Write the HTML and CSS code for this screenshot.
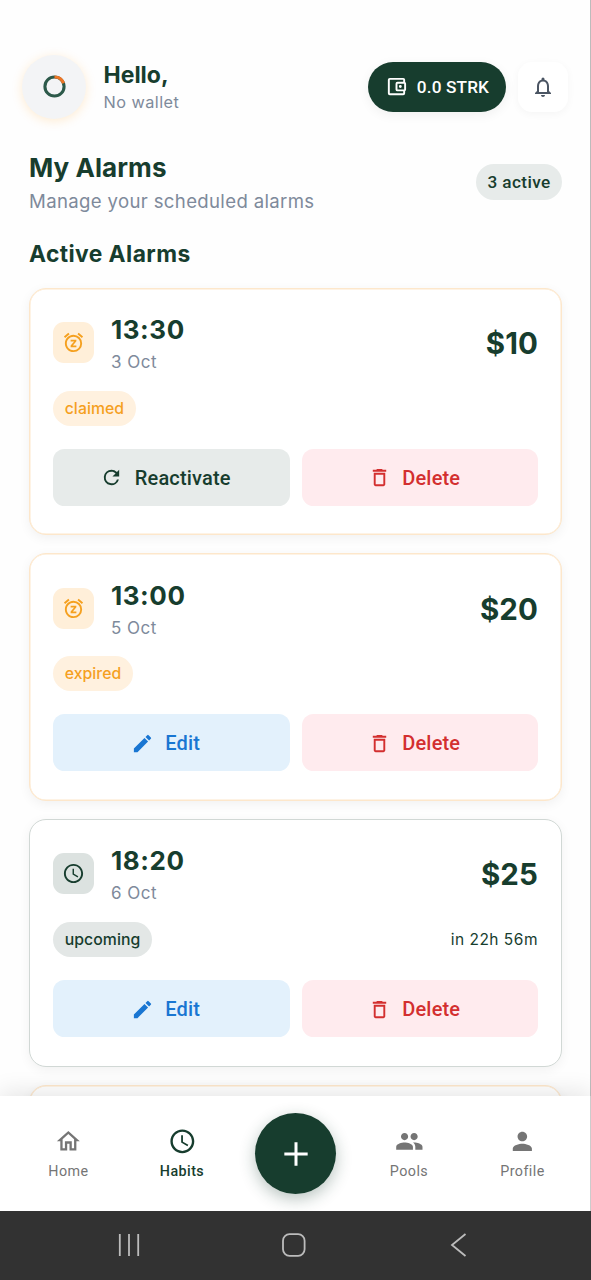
FILE: index.html
```
<!DOCTYPE html>
<html lang="en">
<head>
<meta charset="utf-8">
<title>My Alarms</title>
<link rel="stylesheet" href="styles.css">
</head>
<body>
<svg class="defs" width="0" height="0" aria-hidden="true">
  <symbol id="snooze" viewBox="0 0 24 24"><path d="M22 5.72l-4.6-3.86-1.29 1.53 4.6 3.86L22 5.72zM7.88 3.39L6.6 1.86 2 5.71l1.29 1.53 4.59-3.85zM12 4c-4.97 0-9 4.03-9 9s4.02 9 9 9a9 9 0 0 0 0-18zm0 16c-3.87 0-7-3.13-7-7s3.13-7 7-7 7 3.13 7 7-3.13 7-7 7zm-3-9h3.63L9 15.2V17h6v-2h-3.63L15 10.8V9H9v2z"/></symbol>
  <symbol id="clock" viewBox="0 0 24 24"><path d="M11.99 2C6.47 2 2 6.48 2 12s4.47 10 9.99 10C17.52 22 22 17.52 22 12S17.52 2 11.99 2zM12 20c-4.42 0-8-3.58-8-8s3.58-8 8-8 8 3.58 8 8-3.58 8-8 8zm.5-13H11v6l5.25 3.15.75-1.23-4.5-2.67z"/></symbol>
  <symbol id="trash" viewBox="0 0 24 24"><path d="M6 19c0 1.100.9 2 2 2h8c1.100 0 2-.9 2-2V7H6v12zM8 9h8v10H8V9zm7.500-5l-1-1h-5l-1 1H5v2h14V4z"/></symbol>
  <symbol id="pencil" viewBox="0 0 24 24"><path d="M3 17.250V21h3.750L17.810 9.940l-3.750-3.750L3 17.250zM20.710 7.040a1 1 0 0 0 0-1.410l-2.340-2.340a1 1 0 0 0-1.410 0l-1.830 1.830 3.750 3.750 1.830-1.830z"/></symbol>
  <symbol id="refresh" viewBox="0 0 24 24"><path d="M17.650 6.350A7.960 7.960 0 0 0 12 4a8 8 0 1 0 7.730 10h-2.080A6 6 0 1 1 12 6c1.660 0 3.140.69 4.220 1.780L13 11h7V4l-2.350 2.350z"/></symbol>
</svg>
<div class="phone">
  <main class="screen">
    <header class="top">
      <div class="avatar"><svg viewBox="0 0 24 24"><circle class="ring" cx="12" cy="12" r="10"/><path class="ring-hot" d="M12 2A10 10 0 0 1 21.400 8.600"/></svg></div>
      <div class="who"><div class="hello">Hello,</div><div class="wallet">No wallet</div></div>
      <div class="balance">
        <svg viewBox="0 0 24 24"><path fill-rule="evenodd" d="M21 7.280V5a2 2 0 0 0-2-2H5a2 2 0 0 0-2 2v14a2 2 0 0 0 2 2h14a2 2 0 0 0 2-2v-2.280A2 2 0 0 0 22 15V9a2 2 0 0 0-1-1.720zM20 9v6h-7V9h7zM5 19V5h14v2h-6a2 2 0 0 0-2 2v6a2 2 0 0 0 2 2h6v2H5zM16 10.500a1.500 1.500 0 1 0 0 3 1.500 1.500 0 0 0 0-3z"/></svg>
        <span>0.0 STRK</span>
      </div>
      <div class="bell"><svg viewBox="0 0 24 24"><path d="M12 22c1.100 0 2-.9 2-2h-4c0 1.100.9 2 2 2zm6-6v-5c0-3.070-1.630-5.640-4.500-6.320V4a1.500 1.500 0 0 0-3 0v.68C7.640 5.360 6 7.920 6 11v5l-2 2v1h16v-1l-2-2zm-2 1H8v-6c0-2.480 1.510-4.500 4-4.500s4 2.020 4 4.500v6z"/></svg></div>
    </header>
    <section class="intro">
      <div><h1>My Alarms</h1><p>Manage your scheduled alarms</p></div>
      <span class="count">3 active</span>
    </section>
    <h2>Active Alarms</h2>
    <div class="list">
      <article class="card">
        <div class="summary">
          <span class="tile"><svg><use href="#snooze"/></svg></span>
          <div class="when"><div class="time">13:30</div><div class="date">3 Oct</div></div>
          <div class="stake">$10</div>
        </div>
        <div class="status"><span class="chip">claimed</span></div>
        <div class="actions">
          <div class="btn reactivate"><svg><use href="#refresh"/></svg><span>Reactivate</span></div>
          <div class="btn delete"><svg><use href="#trash"/></svg><span>Delete</span></div>
        </div>
      </article>
      <article class="card">
        <div class="summary">
          <span class="tile"><svg><use href="#snooze"/></svg></span>
          <div class="when"><div class="time">13:00</div><div class="date">5 Oct</div></div>
          <div class="stake">$20</div>
        </div>
        <div class="status"><span class="chip">expired</span></div>
        <div class="actions">
          <div class="btn edit"><svg><use href="#pencil"/></svg><span>Edit</span></div>
          <div class="btn delete"><svg><use href="#trash"/></svg><span>Delete</span></div>
        </div>
      </article>
      <article class="card upcoming">
        <div class="summary">
          <span class="tile"><svg><use href="#clock"/></svg></span>
          <div class="when"><div class="time">18:20</div><div class="date">6 Oct</div></div>
          <div class="stake">$25</div>
        </div>
        <div class="status"><span class="chip">upcoming</span><span class="left">in 22h 56m</span></div>
        <div class="actions">
          <div class="btn edit"><svg><use href="#pencil"/></svg><span>Edit</span></div>
          <div class="btn delete"><svg><use href="#trash"/></svg><span>Delete</span></div>
        </div>
      </article>
      <article class="card"></article>
    </div>
  </main>
  <nav class="tabs">
    <div class="tab"><svg viewBox="-.5 -.5 25 25"><path d="M12 5.690l5 4.500V18h-2v-6H9v6H7v-7.810l5-4.500M12 3L2 12h3v8h6v-6h2v6h6v-8h3L12 3z"/></svg><span>Home</span></div>
    <div class="tab active"><svg><use href="#clock"/></svg><span>Habits</span></div>
    <div class="add"><svg viewBox="0 0 24 24"><path d="M19 12.900h-6.100V19h-1.800v-6.100H5v-1.800h6.100V5h1.800v6.100H19z"/></svg></div>
    <div class="tab"><svg viewBox="0 0 24 24"><path d="M16 11c1.660 0 2.990-1.340 2.990-3S17.660 5 16 5s-3 1.340-3 3 1.340 3 3 3zm-8 0c1.660 0 2.990-1.340 2.990-3S9.660 5 8 5 5 6.340 5 8s1.340 3 3 3zm0 2c-2.330 0-7 1.170-7 3.500V19h14v-2.500c0-2.330-4.670-3.500-7-3.500zm8 0c-.29 0-.62.020-.97.050 1.160.84 1.970 1.970 1.970 3.450V19h6v-2.500c0-2.330-4.670-3.500-7-3.500z"/></svg><span>Pools</span></div>
    <div class="tab"><svg viewBox="0 0 24 24"><path d="M12 12c2.210 0 4-1.790 4-4s-1.790-4-4-4-4 1.790-4 4 1.790 4 4 4zm0 2c-2.670 0-8 1.340-8 4v2h16v-2c0-2.660-5.330-4-8-4z"/></svg><span>Profile</span></div>
  </nav>
  <footer class="system">
    <svg viewBox="0 0 24 24"><path d="M2.800 1v22M12 1v22M21.200 1v22"/></svg>
    <svg viewBox="0 0 24 24"><rect x="1" y="1.200" width="21.600" height="21.600" rx="6.500"/></svg>
    <svg viewBox="0 0 24 24"><path d="M18.500 1L5 12l13.500 11"/></svg>
  </footer>
</div>
</body>
</html>
```
FILE: styles.css
```
* { box-sizing: border-box; }

body {
  margin: 0;
  background: #fefefe;
  font-family: Inter, "Liberation Sans", sans-serif;
  color: #173d2e;
}

.defs { display: block; position: absolute; }
svg { display: block; fill: currentColor; flex: none; }
h1, h2, p { margin: 0; white-space: nowrap; }

.phone {
  width: 591px;
  height: 1280px;
  overflow: hidden;
  display: grid;
  grid-template-rows: 1096px 115px 69px;
}

.screen {
  overflow: hidden;
  padding: 54.500px 28px 0 29px;
  border-right: 1px solid #bcbcbc;
}

.top { display: flex; align-items: center; height: 64px; margin: 0 -6px 0 -7px; }
.avatar {
  width: 64px; height: 64px;
  border-radius: 50%;
  background: #f3f4f6;
  box-shadow: 0 2px 11px rgba(255, 152, 0, .18);
  display: grid; place-items: center;
}
.avatar svg { width: 23px; height: 23px; fill: none; }
.ring { stroke: #2c594a; stroke-width: 3.200; }
.ring-hot { stroke: #ed7626; stroke-width: 3.200; }
.who { margin-left: 17.500px; padding-top: 4px; flex: 1; white-space: nowrap; }
.hello { font-size: 23px; font-weight: 700; line-height: 28px; }
.wallet { font-size: 16.300px; line-height: 27px; color: #7e8a9b; letter-spacing: .45px; }
.balance {
  width: 138px; height: 50px;
  border-radius: 25px;
  background: #173d2e; color: #fff;
  display: flex; align-items: center; justify-content: center;
  gap: 9px;
  font: 500 17.200px Roboto, sans-serif;
  letter-spacing: .14px;
  white-space: nowrap;
  box-shadow: 0 3px 12px rgba(0, 0, 0, .06);
}
.balance svg { width: 23px; height: 23px; }
.bell {
  width: 50px; height: 50px; margin-left: 12px;
  border-radius: 14px;
  background: #fff; color: #4b5563;
  display: grid; place-items: center;
  padding-right: 1px;
  box-shadow: 0 2px 8px rgba(0, 0, 0, .04);
}
.bell svg { width: 24px; height: 24px; }

.intro { display: flex; justify-content: space-between; align-items: center; height: 62px; margin-top: 32px; }
.intro > div { padding-top: 4px; }
h1 { font-size: 26px; line-height: 34px; font-weight: 700; letter-spacing: .07px; }
.intro p { font-size: 18.600px; line-height: 32px; color: #7e8a9b; letter-spacing: .34px; }
.count {
  width: 86px; height: 36px; line-height: 37px;
  border-radius: 18px;
  background: #e7ebea;
  text-align: center;
  font-family: Roboto, sans-serif; font-size: 17.200px; font-weight: 500;
  letter-spacing: .4px;
}
h2 { margin-top: 25px; font-size: 22.800px; line-height: 32px; font-weight: 700; letter-spacing: .42px; }

.list { display: grid; gap: 18px; margin-top: 18px; }
.card {
  width: 533px; height: 247.700px;
  padding: 23px 23px 0;
  border: 1px solid #fde7cb;
  border-radius: 17px;
  background: #fff;
  box-shadow: inset 0 0 0 .5px #fde7cb, 0 3px 12px rgba(0, 0, 0, .055);
}
.card.upcoming { border-color: #d1d8d5; box-shadow: 0 3px 12px rgba(0, 0, 0, .055); }
.summary { display: flex; align-items: center; height: 62px; }
.tile {
  width: 41px; height: 41px;
  border-radius: 11px;
  background: #ffefd9; color: #f5a01f;
  display: grid; place-items: center;
}
.upcoming .tile { background: #dce2e0; color: #173d2e; }
.tile svg { width: 23px; height: 23px; }
.when { margin-left: 17px; padding-top: 3px; flex: 1; white-space: nowrap; }
.time { font-size: 26px; line-height: 36px; font-weight: 700; letter-spacing: .55px; }
.date { font-size: 17px; line-height: 28px; color: #7e8a9b; letter-spacing: .5px; }
.stake { padding-top: 1px; font-size: 29.500px; font-weight: 700; letter-spacing: .1px; }
.status { display: flex; align-items: center; justify-content: space-between; margin-top: 17px; height: 35px; }
.chip {
  height: 35px; line-height: 35px;
  padding: 0 11.700px;
  border-radius: 17.500px;
  background: #fff1df; color: #f5a01f;
  font-size: 15.800px; font-weight: 500;
  letter-spacing: .05px;
}
.upcoming .chip { background: #e3e7e6; color: #173d2e; }
.left { padding-top: 1px; font-size: 15.500px; letter-spacing: .5px; }
.actions { display: grid; grid-template-columns: 1fr 1fr; gap: 12px; margin-top: 23.200px; }
.btn {
  height: 57px;
  padding: 1px 11.500px 0 0;
  border-radius: 11.500px;
  display: flex; align-items: center; justify-content: center;
  gap: 11.500px;
  font: 500 20px Roboto, sans-serif;
  letter-spacing: .18px;
}
.btn svg { width: 23px; height: 23px; }
.reactivate { background: #e7ebea; }
.edit { background: #e3f1fc; color: #1976d2; }
.delete { background: #ffebee; color: #d32f2f; }

.tabs {
  position: relative;
  background: #fff;
  border-right: 1px solid #ccc;
  display: grid;
  grid-template-columns: repeat(5, 113.500px);
  justify-content: center;
  padding-left: 1px;
  box-shadow: 0 -4px 22px rgba(0, 0, 0, .1);
}
.tab {
  padding-top: 30.500px;
  display: flex; flex-direction: column; align-items: center;
  gap: 6px;
  color: #757575;
  font: 400 14.300px/20px Roboto, sans-serif;
  letter-spacing: .45px;
}
.tab svg { width: 28.700px; height: 28.700px; }
.tab.active { color: #173d2e; font-weight: 500; }
.add {
  width: 81px; height: 81px;
  margin-top: 17px;
  justify-self: center;
  border-radius: 50%;
  background: #173d2e; color: #fff;
  display: grid; place-items: center;
  box-shadow: 0 5px 16px rgba(23, 61, 46, .3);
}
.add svg { width: 40px; height: 40px; }

.system {
  position: relative;
  background: #323232;
  display: flex; align-items: center;
  padding: 0 120px 1px 117px;
  justify-content: space-between;
}
.system svg { width: 24px; height: 24px; fill: none; stroke: #bcbcbc; stroke-width: 1.800; }
```
